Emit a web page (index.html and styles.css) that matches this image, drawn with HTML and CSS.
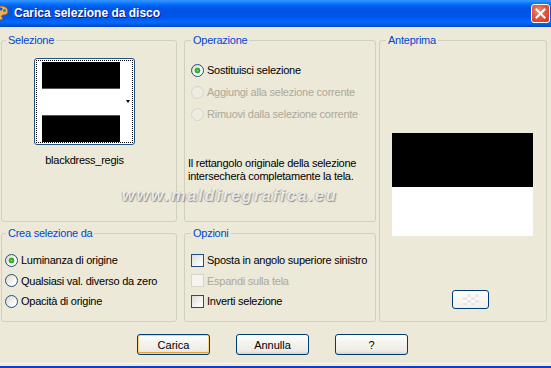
FILE: index.html
```
<!DOCTYPE html>
<html>
<head>
    <meta charset="utf-8">
    <title>Carica selezione da disco</title>
    <link rel="stylesheet" href="styles.css">
</head>
<body>

<div class="window">

<div class="titlebar">
    <span class="app-icon">
        <svg width="16" height="16" viewBox="0 0 16 16">
            <path d="M8 1 C3 1 1 4 1 8 C1 12 4 15 8 15 C10 15 10 13 9 12 C8 11 9 10 11 10 C14 10 15 8 15 6 C15 3 12 1 8 1 Z" fill="#e8b060" stroke="#8a5a20" stroke-width="1"/>
            <circle cx="5" cy="6" r="1.5" fill="#d02020"/>
            <circle cx="8" cy="4" r="1.5" fill="#2050e0"/>
            <circle cx="11.5" cy="5.5" r="1.5" fill="#20a040"/>
            <circle cx="4.5" cy="10" r="1.5" fill="#f0e020"/>
        </svg>
    </span>
    <span class="title">Carica selezione da disco</span>
    <span class="close">
        <svg width="11" height="11" viewBox="0 0 11 11">
            <path d="M1.5 1.5 L9.5 9.5 M9.5 1.5 L1.5 9.5" stroke="#fff" stroke-width="2" stroke-linecap="square"/>
        </svg>
    </span>
</div>

<div class="client">

    <div class="groups">

        <fieldset class="group g-sel">
            <legend>Selezione</legend>
            <div class="group-body">
                <div class="thumb">
                    <div class="thumb-focus">
                        <div class="thumb-img">
                            <div class="bar-black"></div>
                            <div class="bar-white"></div>
                            <div class="bar-black"></div>
                        </div>
                        <span class="thumb-arrow"></span>
                    </div>
                </div>
                <div class="thumb-name">blackdress_regis</div>
            </div>
        </fieldset>

        <fieldset class="group g-op">
            <legend>Operazione</legend>
            <div class="group-body">
                <div class="opt"><span class="radio checked"></span>Sostituisci selezione</div>
                <div class="opt disabled"><span class="radio"></span>Aggiungi alla selezione corrente</div>
                <div class="opt disabled"><span class="radio"></span>Rimuovi dalla selezione corrente</div>
                <p class="note">Il rettangolo originale della selezione<br>intersecherà completamente la tela.</p>
            </div>
        </fieldset>

        <fieldset class="group g-prev">
            <legend>Anteprima</legend>
            <div class="group-body">
                <div class="preview">
                    <div class="preview-black"></div>
                </div>
                <div class="mini-btn"><span class="checker"></span></div>
            </div>
        </fieldset>

        <fieldset class="group g-crea">
            <legend>Crea selezione da</legend>
            <div class="group-body">
                <div class="opt"><span class="radio checked"></span>Luminanza di origine</div>
                <div class="opt"><span class="radio"></span>Qualsiasi val. diverso da zero</div>
                <div class="opt"><span class="radio"></span>Opacità di origine</div>
            </div>
        </fieldset>

        <fieldset class="group g-opz">
            <legend>Opzioni</legend>
            <div class="group-body">
                <div class="opt"><span class="check"></span>Sposta in angolo superiore sinistro</div>
                <div class="opt disabled"><span class="check"></span>Espandi sulla tela</div>
                <div class="opt"><span class="check"></span>Inverti selezione</div>
            </div>
        </fieldset>

    </div>

    <div class="buttons">
        <button class="btn default">Carica</button>
        <button class="btn">Annulla</button>
        <button class="btn">?</button>
    </div>

    <div class="frame-edge"></div>

    <span class="watermark">www.maldiregrafica.eu</span>
</div>

</div>

</body>
</html>
```

FILE: styles.css
```
html, body {margin: 0; padding: 0;}
body {background: #ece9d8; font-family: "Liberation Sans", Arial, sans-serif; font-size: 11px; color: #000;}

.window {width: 551px; height: 368px; display: flex; flex-direction: column; overflow: hidden;
    border-bottom: 2px solid #0b3ddb; box-sizing: border-box;}

/* title bar */
.titlebar {height: 27px; flex: none; display: flex; align-items: center;
    background: linear-gradient(to bottom, #3593ff 0%, #288eff 6%, #127dff 10%, #036ffc 16%, #0262ee 22%,
        #0057e5 30%, #0054e3 40%, #0055eb 60%, #005bf5 70%, #026afe 80%, #0062ef 88%, #0052d6 95%, #0046c0 100%);}
.app-icon {width: 16px; height: 16px; margin-left: -7px; margin-top: -2px;}
.title {margin-left: 5px; color: #fff; font-weight: bold; font-size: 12px;
    text-shadow: 1px 1px 0 #0a1883; margin-top: -2px;}
.close {margin-left: auto; margin-right: 1px; margin-top: -1px; width: 19px; height: 19px; box-sizing: border-box;
    border: 1px solid #fff; border-radius: 3px; display: flex; align-items: center; justify-content: center;
    background: radial-gradient(circle at 40% 35%, #f0917a 0%, #e2583e 45%, #c9381e 100%);}

/* client area */
.client {flex: 1; display: flex; flex-direction: column; position: relative; letter-spacing: -0.25px;}

.groups {display: grid; margin: 7px 0 0 1px;
    grid-template-columns: 176px 7px 192px 3px 168px;
    grid-template-rows: 188px 95px; row-gap: 5px;}

.group {margin: 0; padding: 0; min-width: 0; border: 1px solid #d0d0bf; border-radius: 3px;}
.group legend {color: #0046d5; padding: 0 2px; margin-left: 6px; line-height: 13px;}
.group-body {display: flex; flex-direction: column; align-items: flex-start;}

.g-sel {grid-column: 1; grid-row: 1;}
.g-op {grid-column: 3; grid-row: 1;}
.g-prev {grid-column: 5; grid-row: 1 / 3;}
.g-crea {grid-column: 1; grid-row: 2;}
.g-opz {grid-column: 3; grid-row: 2;}
.g-sel legend, .g-crea legend {margin-left: 4px;}

.g-sel .group-body {padding-left: 32px;}
.g-op .group-body {padding: 12px 0 0 6px;}
.g-prev .group-body {padding-left: 12px;}
.g-crea .group-body {padding: 10px 0 0 3px;}
.g-opz .group-body {padding: 10px 0 0 6px;}

/* selection thumbnail */
.thumb {margin-top: 11px; width: 101px; height: 87px; box-sizing: border-box; border: 1px solid #1c5180;
    border-radius: 3px; background: #fff; padding: 1px;}
.thumb-focus {height: 100%; box-sizing: border-box; border: 1px dotted #000; position: relative; padding: 1px 0 0 5px;}
.thumb-img {width: 78px; display: flex; flex-direction: column;}
.bar-black {height: 26px; background: #000; border-bottom: 1px solid #555;}
.bar-white {height: 26px; background: #fff;}
.bar-black + .bar-white + .bar-black {border-bottom: 0; border-top: 1px solid #555; height: 26px;}
.thumb-arrow {position: absolute; right: 2px; top: 39px; width: 0; height: 0;
    border-left: 2.5px solid transparent; border-right: 2.5px solid transparent; border-top: 3px solid #000;}
.thumb-name {width: 101px; text-align: center; margin-top: 9px; line-height: 13px;}

/* options */
.opt {height: 22px; display: flex; align-items: center; white-space: nowrap;}
.g-crea .opt, .g-opz .opt {height: 20.5px;}
.opt.disabled {color: #aca899;}

.radio {width: 13px; height: 13px; flex: none; box-sizing: border-box; border-radius: 50%; margin-right: 3px;
    border: 1px solid #1c5180; background: linear-gradient(135deg, #dcd8cc 0%, #fff 80%);}
.radio.checked {background: radial-gradient(circle, #62d062 0, #21a121 2.5px, transparent 3.2px),
    linear-gradient(135deg, #dcd8cc 0%, #fff 80%);}
.disabled .radio {border-color: #d8d5c8; background: #eeece2;}

.check {width: 13px; height: 13px; flex: none; box-sizing: border-box; margin-right: 3px;
    border: 1px solid #1c5180; background: linear-gradient(135deg, #dcdcd7 0%, #fff 90%);}
.disabled .check {border-color: #d8d5c8; background: #f5f4ee;}

.note {margin: 32px 0 0 -3px; line-height: 13px;}

/* preview */
.preview {margin-top: 86px; width: 141px; height: 103px; background: #fff;}
.preview-black {height: 54px; background: #000;}
.mini-btn {margin: 54px 0 0 60px; width: 37px; height: 19px; box-sizing: border-box; border: 1px solid #003c74;
    border-radius: 3px; background: linear-gradient(#fff, #f0efe8); display: flex; align-items: center; justify-content: center;}
.checker {width: 16px; height: 11px; opacity: 0.35;
    background: conic-gradient(#ccc 25%, #fff 0 50%, #ccc 0 75%, #fff 0) 0 0 / 8px 6px;}

/* buttons */
.buttons {display: flex; justify-content: center; gap: 26px; margin-top: 12px; padding-right: 6px;}
.btn {width: 73px; height: 21px; padding: 0; font: inherit; color: #000; border: 1px solid #003c74; border-radius: 3px;
    background: linear-gradient(#fff 0%, #f4f3ee 40%, #ecebe6 85%, #d6d0c5 100%);}
.btn.default {box-shadow: inset 0 0 0 1px #fcd28a, inset 0 -1px 0 1px #e5a33e;}

.frame-edge {margin-top: auto; margin-bottom: 2px; height: 1px; background: #f7f5ee;}

.watermark {position: absolute; left: 122px; top: 160px; font-size: 16px; font-weight: bold; font-style: italic;
    letter-spacing: 2px; color: rgba(255, 255, 255, 0.75);
    text-shadow: 1px 1px 1px rgba(80, 80, 80, 0.55), -1px 0 1px rgba(120, 120, 120, 0.4);}
```
